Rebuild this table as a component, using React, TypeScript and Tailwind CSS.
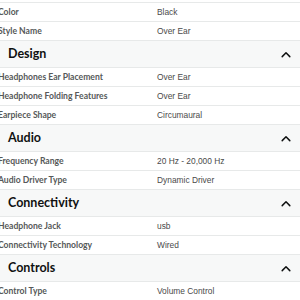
import React from 'react';

type Section = {
  title?: string;
  rows: [string, string][];
};

const sections: Section[] = [
  { rows: [['Color', 'Black'], ['Style Name', 'Over Ear']] },
  {
    title: 'Design',
    rows: [
      ['Headphones Ear Placement', 'Over Ear'],
      ['Headphone Folding Features', 'Over Ear'],
      ['Earpiece Shape', 'Circumaural'],
    ],
  },
  {
    title: 'Audio',
    rows: [
      ['Frequency Range', '20 Hz - 20,000 Hz'],
      ['Audio Driver Type', 'Dynamic Driver'],
    ],
  },
  {
    title: 'Connectivity',
    rows: [
      ['Headphone Jack', 'usb'],
      ['Connectivity Technology', 'Wired'],
    ],
  },
  { title: 'Controls', rows: [['Control Type', 'Volume Control']] },
];

function Chevron() {
  return (
    <svg width="10" height="7" viewBox="0 0 10 7" fill="none" className="mr-[9px]">
      <path d="M1.2 5.6 L5 1.8 L8.8 5.6" stroke="#0f1111" strokeWidth="1.5" strokeLinecap="round" strokeLinejoin="round" />
    </svg>
  );
}

export default function App() {
  return (
    <div className="w-[300px] h-[300px] overflow-hidden bg-white">
      <div className="h-[3px] border-b border-[#e7e9e9]" />
      {sections.map((s, i) => (
        <div key={i}>
          {s.title && (
            <div className="h-[27px] bg-[#f7f8f8] border-b border-[#e7e9e9] flex items-center justify-between pl-[8px]">
              <span className="font-['Lato',sans-serif] font-bold text-[12.5px] text-[#0f1111]">{s.title}</span>
              <Chevron />
            </div>
          )}
          {s.rows.map(([label, value]) => (
            <div key={label} className="h-[19px] border-b border-[#e7e9e9] flex items-center">
              <span className="w-[159px] -ml-[2px] font-['Lato',sans-serif] font-bold text-[8.6px] text-[#565959] whitespace-nowrap">
                {label}
              </span>
              <span className="font-['Liberation_Sans',sans-serif] text-[8.4px] text-[#4a4a4a] whitespace-nowrap">{value}</span>
            </div>
          ))}
        </div>
      ))}
    </div>
  );
}
